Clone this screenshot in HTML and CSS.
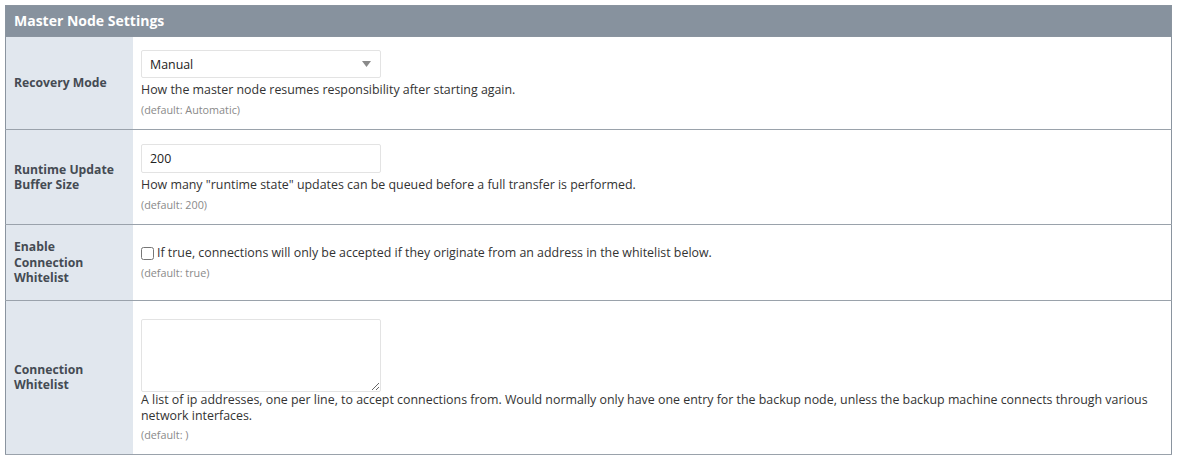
FILE: index.html
```html
<!DOCTYPE html>
<html>
<head>
<meta charset="utf-8">
<title>Master Node Settings</title>
<link rel="stylesheet" href="styles.css">
</head>
<body>
<table class="settings">
  <thead>
    <tr><th colspan="2" class="title">Master Node Settings</th></tr>
  </thead>
  <tbody>
    <tr>
      <td class="label">Recovery Mode</td>
      <td class="field">
        <div class="select-wrap">
          <select class="control">
            <option>Manual</option>
            <option>Automatic</option>
          </select>
          <svg class="caret" width="9" height="6" viewBox="0 0 9 6"><path d="M0 0H9L4.5 6Z" fill="#8a8a8a"/></svg>
        </div>
        <div class="desc">How the master node resumes responsibility after starting again.</div>
        <div class="default">(default: Automatic)</div>
      </td>
    </tr>
    <tr>
      <td class="label">Runtime Update Buffer Size</td>
      <td class="field">
        <input class="control input" type="text" value="200">
        <div class="desc">How many "runtime state" updates can be queued before a full transfer is performed.</div>
        <div class="default">(default: 200)</div>
      </td>
    </tr>
    <tr>
      <td class="label">Enable Connection Whitelist</td>
      <td class="field">
        <label class="desc check"><input type="checkbox" class="box">If true, connections will only be accepted if they originate from an address in the whitelist below.</label>
        <div class="default">(default: true)</div>
      </td>
    </tr>
    <tr>
      <td class="label">Connection Whitelist</td>
      <td class="field">
        <textarea class="control area"></textarea>
        <div class="desc">A list of ip addresses, one per line, to accept connections from. Would normally only have one entry for the backup node, unless the backup machine connects through various network interfaces.</div>
        <div class="default tight">(default: )</div>
      </td>
    </tr>
  </tbody>
</table>
</body>
</html>
```
FILE: styles.css
```css
body {
  margin: 5px;
  background: #ffffff;
  font-family: "Open Sans", "Liberation Sans", sans-serif;
}

.settings {
  width: 1167px;
  border-collapse: collapse;
  border: 1px solid #8a949f;
}

.title {
  background: #87929e;
  color: #ffffff;
  text-align: left;
  font-size: 14px;
  font-weight: 700;
  height: 30px;
  padding: 0 8px;
  line-height: 30px;
  border-bottom: 1px solid #8a949f;
}

.settings tbody tr {
  border-bottom: 1px solid #9aa2ab;
}

.label {
  width: 110px;
  background: #e1e7ee;
  color: #454b53;
  font-size: 12.2px;
  font-weight: 700;
  line-height: 15.5px;
  padding: 14px 9px 14px 8px;
  vertical-align: middle;
}

.field {
  padding: 13px 8px 11px 8px;
  vertical-align: middle;
  color: #333;
  font-size: 12.4px;
}

.control {
  box-sizing: border-box;
  width: 240px;
  border: 1px solid #e3e3e3;
  border-radius: 2px;
  background: #fff;
  font-family: inherit;
  font-size: 12.4px;
  color: #222;
  outline: none;
  display: block;
}

.select-wrap {
  position: relative;
  width: 240px;
  margin-bottom: 4px;
}

select.control {
  -webkit-appearance: none;
  appearance: none;
  height: 28px;
  padding: 0 8px;
}

.caret {
  position: absolute;
  right: 10px;
  top: 11px;
  pointer-events: none;
}

.input {
  height: 29px;
  padding: 0 8px;
  margin-top: 1px;
  margin-bottom: 4px;
}

.area {
  height: 73px;
  margin-top: 5px;
  resize: both;
  padding: 6px 8px;
}

.desc {
  line-height: 16px;
  color: #333;
  display: block;
}

.check {
  display: flex;
  align-items: center;
}

.box {
  margin: 0 3px 0 0;
  width: 13px;
  height: 13px;
}

.default {
  margin-top: 4px;
  font-size: 10.8px;
  line-height: 16px;
  color: #8a8a8a;
}

.default.tight {
  margin-top: 3px;
}
```
